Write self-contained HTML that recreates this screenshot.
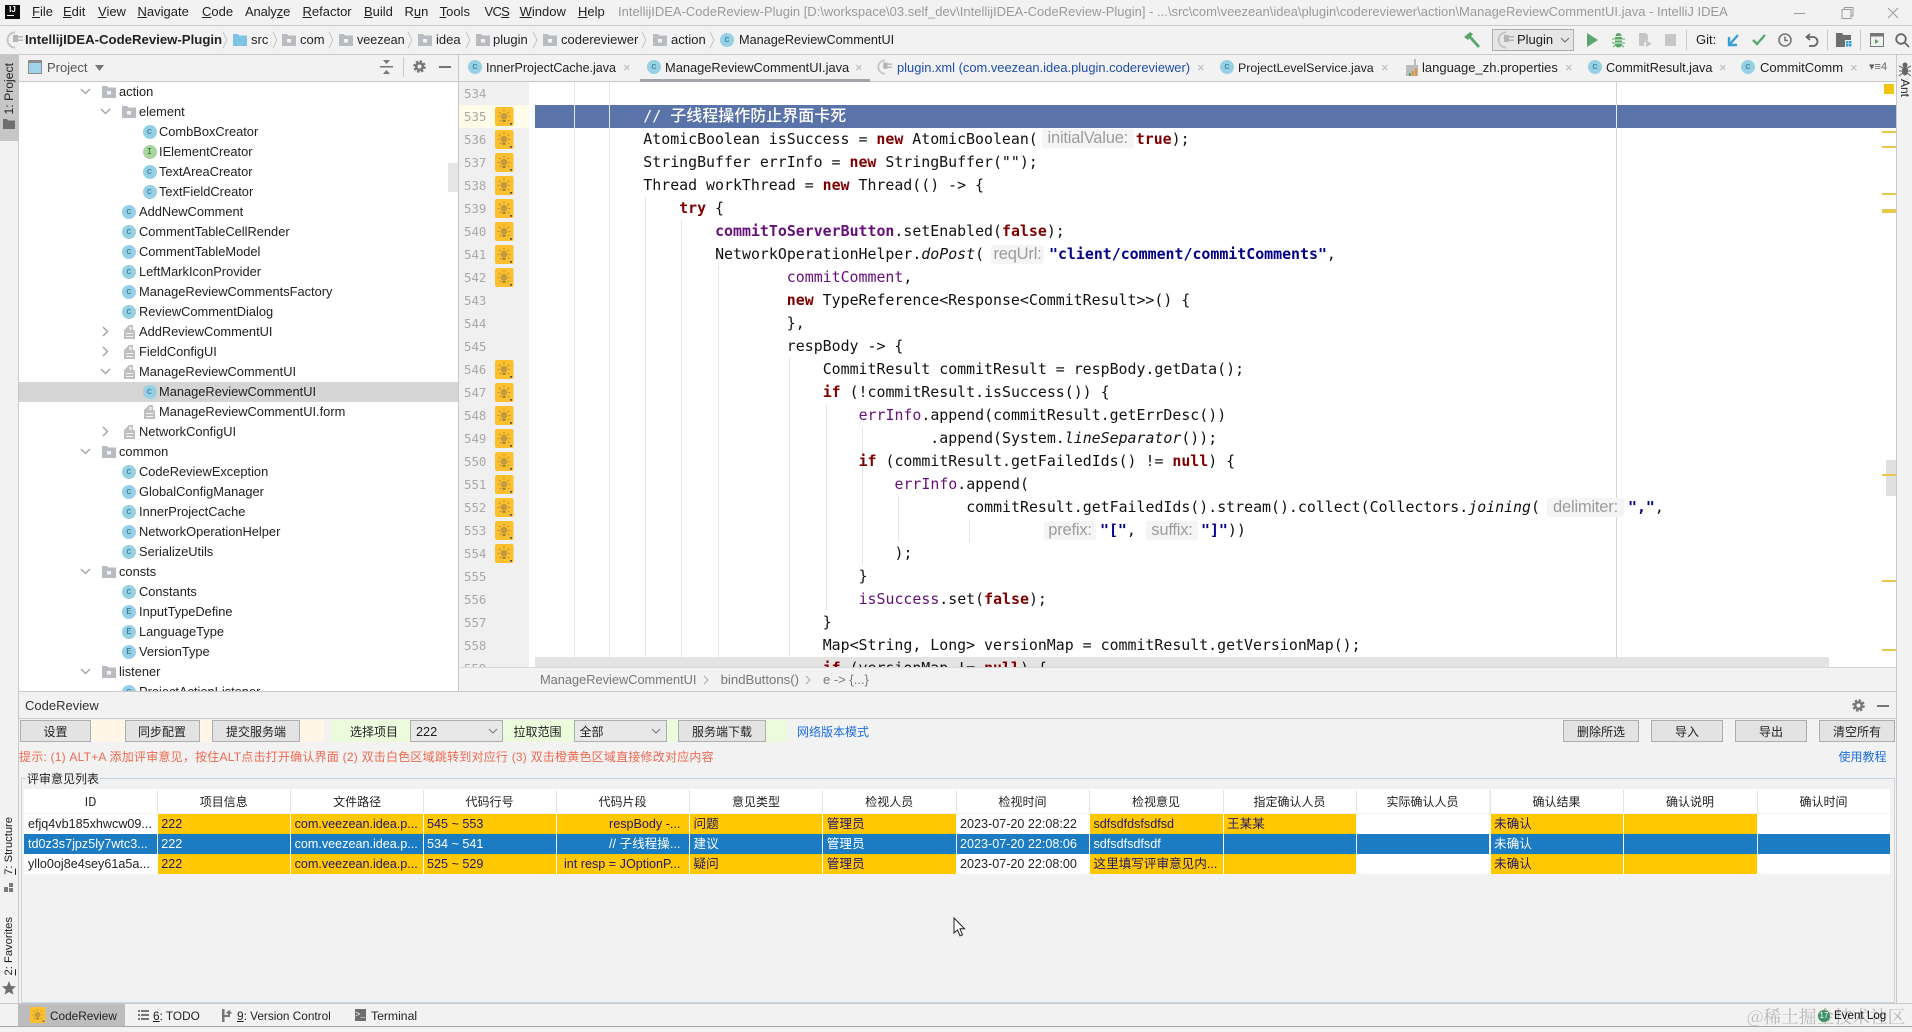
<!DOCTYPE html>
<html><head><meta charset="utf-8"><title>IntelliJ IDEA</title>
<style>
html,body{margin:0;padding:0;width:1912px;height:1032px;overflow:hidden;background:#f2f2f2}
body{position:relative;font:12.7px "Liberation Sans","Noto Sans CJK SC",sans-serif;color:#1c1c1c}
.a{position:absolute;white-space:nowrap}
svg.a{overflow:visible}
.m{top:0;height:25px;line-height:24px;font-size:13px;color:#222}
.n{top:26px;height:28px;line-height:28px;font-size:13px;color:#222}
.h{background:#c9c9c9;height:1px;position:absolute}
.v{background:#c9c9c9;width:1px;position:absolute}
.t{height:20px;line-height:20px;color:#222;font-size:12.85px}
.ci{position:absolute;width:14px;height:14px;border-radius:50%;background:#95d0e4;color:#2f6f92;font:9px/14px "Liberation Mono",monospace;text-align:center}
.g{background:#a8d5a0;color:#3d6b3d}
.tab{top:54px;height:26px;line-height:28px;font-size:13px;color:#222}
.x{top:54px;height:26px;line-height:27px;font-size:13px;color:#b5b5b5}
.ln{left:464px;width:24px;font:12.4px/23px "DejaVu Sans Mono",monospace;color:#a8a8a8;height:23px}
.c{font:14.9px/23px "DejaVu Sans Mono","Noto Sans CJK SC",monospace;height:23px;color:#111}
.k{color:#7f0000;font-weight:bold}
.s{color:#00008b;font-weight:bold}
.f{color:#660e7a;font-weight:bold}
.p{color:#660e7a}
.i{font-style:italic}
.hint{display:inline-block;font:16.5px/19px "Liberation Sans",sans-serif;color:#9c9c9c;background:#f5f5f5;border-radius:3px;text-align:center;vertical-align:1px;letter-spacing:-.2px}
.gd{position:absolute;width:1px;background:#e6e6e6}
.b{top:720px;height:20px;background:#e3e3e3;border:1px solid #aeaeae;text-align:center;font:12px/21px "Noto Sans CJK SC",sans-serif;color:#222}
.lb{font:12px/23px "Noto Sans CJK SC",sans-serif;top:720px;color:#222}
.th{top:789px;height:24px;width:133px;background:#fff;text-align:center;font:12px/26px "Noto Sans CJK SC",sans-serif;color:#222}
.td{height:20px;width:133px;overflow:hidden;font:12.6px/20px "Liberation Sans","Noto Sans CJK SC",sans-serif;box-sizing:border-box;padding-left:4px}
.o{background:#ffc800;color:#20186e}
.w{background:#fff;color:#222}
.u{background:#1b7bc3;color:#fff}
.st{font-size:11.8px;line-height:22px;top:1005px;height:22px;color:#222}
.vt{writing-mode:vertical-rl;transform:rotate(180deg);font-size:11.2px;line-height:15px;color:#222;white-space:nowrap;position:absolute}
</style></head><body>
<svg width="0" height="0" style="position:absolute">
<symbol id="bulb" viewBox="0 0 19 19"><rect width="18.5" height="19" rx="2" fill="#fcc02e"/><g stroke="#b08a34" stroke-width="1" fill="none"><path d="M9 2.800V4.400M4 4.800l1.300 1.300M14 4.800l-1.300 1.300M2.800 9.500h1.600M13.600 9.500h1.600M4.800 14l1.200-1.100M13 13l1.200 1"/></g><circle cx="9" cy="9.300" r="3.400" fill="#c49a3e"/><path d="M7.400 13h3.200v1.800H7.400z" fill="#9a8044"/><path d="M15 16h2v1.700h-2z" fill="#555"/></symbol>
<symbol id="fold" viewBox="0 0 14 12"><path d="M0 0h5l1.200 1.500H14V12H0z" fill="#b8bcc1"/><rect x="5" y="5" width="4" height="3.500" fill="#f4f4f4"/></symbol>
<symbol id="bfold" viewBox="0 0 14 12"><path d="M0 0h5l1.200 1.500H14V12H0z" fill="#7fc3e6"/></symbol>
<symbol id="form" viewBox="0 0 11 14"><path d="M0 5h11v9H0z M0 5l5-5h4v5z" fill="#bfc0c2"/><path d="M2 8h7v1H2zM2 11h7v1H2zM5.500 2h2v3h-2z" fill="#f4f4f4"/></symbol>
<symbol id="plug" viewBox="0 0 18 18"><path d="M9 1.500a7.500 7.500 0 1 0 0 15" fill="none" stroke="#c4c4c4" stroke-width="2"/><path d="M7 4h5v7H7z" fill="#b4b4b4"/><path d="M12 5h5v1.500h-5zM12 8.500h5V10h-5z" fill="#b4b4b4"/></symbol>
<symbol id="gear" viewBox="0 0 13 13"><circle cx="6.500" cy="6.500" r="5" fill="none" stroke="#777" stroke-width="2.600" stroke-dasharray="2.300 1.630"/><circle cx="6.500" cy="6.500" r="3.300" fill="none" stroke="#777" stroke-width="2.600"/></symbol>
</svg>

<!-- menu bar -->
<div class="a" style="left:5px;top:5px;width:15px;height:14px;background:#0d0d0d;color:#fff;font:bold 8px/9px 'Liberation Sans',sans-serif;text-align:center">IJ<div style="width:7px;height:1px;background:#fff;margin:1px 0 0 2px"></div></div>
<span class="a m" style="left:32px"><u>F</u>ile</span>
<span class="a m" style="left:63px"><u>E</u>dit</span>
<span class="a m" style="left:98px"><u>V</u>iew</span>
<span class="a m" style="left:137.500px"><u>N</u>avigate</span>
<span class="a m" style="left:202px"><u>C</u>ode</span>
<span class="a m" style="left:245px;letter-spacing:-.15px">Analy<u>z</u>e</span>
<span class="a m" style="left:302.500px"><u>R</u>efactor</span>
<span class="a m" style="left:364px"><u>B</u>uild</span>
<span class="a m" style="left:404.500px">R<u>u</u>n</span>
<span class="a m" style="left:439.600px"><u>T</u>ools</span>
<span class="a m" style="left:484.500px;letter-spacing:-.7px">VC<u>S</u></span>
<span class="a m" style="left:519.600px"><u>W</u>indow</span>
<span class="a m" style="left:578px"><u>H</u>elp</span>
<span class="a m" style="left:618px;color:#9a9a9a;font-size:13px">IntellijIDEA-CodeReview-Plugin [D:\workspace\03.self_dev\IntellijIDEA-CodeReview-Plugin] - ...\src\com\veezean\idea\plugin\codereviewer\action\ManageReviewCommentUI.java - IntelliJ IDEA</span>
<svg class="a" style="left:1794px;top:6px" width="110" height="14" fill="none" stroke="#9a9a9a"><path d="M0 7.500h11M48 3.500h9v9h-9zM50.500 3.500V1.500h8.500v8.500h-2M94 2l10 10M104 2l-10 10"/></svg>
<div class="h" style="left:0;top:25px;width:1912px"></div>

<!-- nav bar -->
<svg class="a" style="left:6px;top:31px" width="18" height="18"><use href="#plug"/></svg>
<span class="a n" style="left:25px;font-weight:bold;font-size:13.200px">IntellijIDEA-CodeReview-Plugin</span>
<svg class="a" style="left:233px;top:34px" width="14" height="12"><use href="#bfold"/></svg><span class="a n" style="left:251px">src</span>
<svg class="a" style="left:282px;top:34px" width="14" height="12"><use href="#fold"/></svg><span class="a n" style="left:300px">com</span>
<svg class="a" style="left:339px;top:34px" width="14" height="12"><use href="#fold"/></svg><span class="a n" style="left:357px;font-size:12.6px">veezean</span>
<svg class="a" style="left:418px;top:34px" width="14" height="12"><use href="#fold"/></svg><span class="a n" style="left:436px">idea</span>
<svg class="a" style="left:475.500px;top:34px" width="14" height="12"><use href="#fold"/></svg><span class="a n" style="left:493px">plugin</span>
<svg class="a" style="left:543px;top:34px" width="14" height="12"><use href="#fold"/></svg><span class="a n" style="left:561px">codereviewer</span>
<svg class="a" style="left:653px;top:34px" width="14" height="12"><use href="#fold"/></svg><span class="a n" style="left:671px">action</span>
<span class="ci" style="left:720px;top:33px">c</span><span class="a n" style="left:739px;font-size:12.7px">ManageReviewCommentUI</span>
<svg class="a" style="left:0;top:30px" width="720" height="20" fill="none" stroke="#c4c4c4"><path d="M223 2l4 8-4 8M273 2l4 8-4 8M329 2l4 8-4 8M408 2l4 8-4 8M466 2l4 8-4 8M533 2l4 8-4 8M642 2l4 8-4 8M710 2l4 8-4 8"/></svg>
<!-- toolbar right -->
<svg class="a" style="left:1463px;top:31px" width="18" height="18"><path d="M1 6L7 1l3 2-5 6z" fill="#59a869"/><path d="M6 7l2-2 9 10-2 2z" fill="#59a869"/></svg>
<div class="a" style="left:1492px;top:29px;width:80px;height:20px;border:1px solid #aeaeae;background:#e6e6e6"></div>
<svg class="a" style="left:1497px;top:31px" width="18" height="18"><use href="#plug"/></svg>
<span class="a" style="left:1517px;top:29px;line-height:22px;font-size:13px">Plugin</span>
<svg class="a" style="left:1560px;top:37px" width="10" height="6" fill="none" stroke="#666"><path d="M1 1l4 4 4-4"/></svg>
<svg class="a" style="left:1586px;top:32px" width="14" height="16"><path d="M1 1l11 7-11 7z" fill="#59a869"/></svg>
<svg class="a" style="left:1612px;top:32px" width="13" height="16"><path d="M3 5h7v7a3.500 3.500 0 0 1-7 0z M3.500 4a3 3 0 0 1 6 0z" fill="#59a869"/><path d="M0 7h13M0 11h13M1 15l2.500-2M12 15l-2.500-2" stroke="#59a869"/><path d="M3 8h7M3 11h7" stroke="#e6f3e6"/></svg>
<svg class="a" style="left:1637px;top:32px" width="16" height="16"><path d="M2 1h7l2 2v5l-4 3v3H2z" fill="#c6c6c6"/><path d="M9 8l6 4-6 3z" fill="#c6c6c6"/></svg>
<div class="a" style="left:1665px;top:34px;width:11px;height:12px;background:#c6c6c6"></div>
<div class="v" style="left:1686px;top:30px;height:20px"></div>
<span class="a" style="left:1696px;top:29px;line-height:22px;font-size:13px">Git:</span>
<svg class="a" style="left:1727px;top:33px" width="13" height="14"><path d="M11 2L3 11M2 4v8h8" fill="none" stroke="#389fd6" stroke-width="2.400"/></svg>
<svg class="a" style="left:1752px;top:34px" width="14" height="12"><path d="M1 6l4 4 8-9" fill="none" stroke="#59a869" stroke-width="2.400"/></svg>
<svg class="a" style="left:1778px;top:33px" width="14" height="14" fill="none" stroke="#777" stroke-width="1.600"><circle cx="7" cy="7" r="6"/><path d="M7 3.500V7.500h3"/></svg>
<svg class="a" style="left:1805px;top:33px" width="14" height="14" fill="none" stroke="#666" stroke-width="1.800"><path d="M5 1L1.500 4 5 7M2 4h6a4.500 4.500 0 0 1 0 9H4"/></svg>
<div class="v" style="left:1827px;top:30px;height:20px"></div>
<svg class="a" style="left:1836px;top:33px" width="16" height="14"><path d="M0 0h6l1.500 2H15v5H9v7H0z" fill="#6e6e6e"/><path d="M10 8h2.500v2.500H10zM13 8h2.500v2.500H13zM10 11h2.500v2.500H10zM13 11h2.500v2.500H13z" fill="#389fd6"/></svg>
<div class="v" style="left:1860px;top:30px;height:20px"></div>
<svg class="a" style="left:1870px;top:33px" width="14" height="14"><rect x=".5" y=".5" width="13" height="13" fill="none" stroke="#777"/><path d="M1 1h12v2.500H1z" fill="#777"/><path d="M5 6l4 2.500-4 2.500z" fill="#59a869"/></svg>
<svg class="a" style="left:1895px;top:33px" width="15" height="15" fill="none" stroke="#666" stroke-width="1.800"><circle cx="6" cy="6" r="4.800"/><path d="M9.500 9.500l4.500 4.500"/></svg>
<div class="h" style="left:0;top:54px;width:1912px"></div>

<!-- left stripe -->
<div class="a" style="left:0;top:55px;width:18px;height:86px;background:#c6c6c6"></div>
<div class="vt" style="left:2px;top:63px;font-size:12.2px">1: Project</div>
<svg class="a" style="left:3px;top:119px" width="12" height="10"><path d="M0 0h4l1 1.500h7V10H0z" fill="#6e6e6e"/></svg>
<div class="vt" style="left:2px;top:817px"><u>7</u>: Structure</div>
<svg class="a" style="left:4px;top:883px" width="10" height="10"><path d="M0 4h4v5H0zM5 0h4v4H5zM5 5h4v4H5z" fill="#7a7a7a"/></svg>
<div class="vt" style="left:2px;top:917px"><u>2</u>: Favorites</div>
<svg class="a" style="left:2px;top:981px" width="14" height="14"><path d="M7 0l2 5 5 .4-3.800 3.200 1.200 5L7 11l-4.400 2.600 1.200-5L0 5.400 5 5z" fill="#6e6e6e"/></svg>
<div class="v" style="left:18px;top:55px;height:949px"></div>

<!-- project panel -->
<svg class="a" style="left:28px;top:60px" width="14" height="14"><rect x=".5" y=".5" width="13" height="13" fill="#9fd3ea" stroke="#8c8c8c"/><path d="M1 1h12v2H1z" fill="#8c8c8c"/></svg>
<span class="a" style="left:47px;top:57px;line-height:22px;font-size:13px;color:#555">Project</span>
<svg class="a" style="left:95px;top:65px" width="10" height="6"><path d="M0 0h9L4.500 6z" fill="#777"/></svg>
<svg class="a" style="left:380px;top:60px" width="13" height="14" fill="#777"><path d="M0 6h13v1.500H0z"/><path d="M3 0h7L6.500 4zM3 14h7L6.500 10z"/></svg>
<div class="v" style="left:403px;top:57px;height:20px"></div>
<svg class="a" style="left:413px;top:60px" width="13" height="13"><use href="#gear"/></svg>
<div class="a" style="left:439px;top:66px;width:12px;height:2px;background:#777"></div>
<div class="h" style="left:19px;top:81px;width:1877px"></div>

<div class="a" style="left:19px;top:82px;width:439px;height:610px;background:#fff;overflow:hidden">
<div class="a" style="left:0;top:300px;width:439px;height:20px;background:#d5d5d5"></div>
<div class="a" style="left:429px;top:81px;width:10px;height:29px;background:#e6e6e6"></div>
<svg class="a" style="left:0;top:0" width="100" height="610" fill="none" stroke="#a6a6a6" stroke-width="1.500"><path d="M62 7l4.500 4.500L71 7M82 27l4.500 4.500L91 27M82 287l4.500 4.500L91 287M62 367l4.500 4.500L71 367M62 487l4.500 4.500L71 487M62 587l4.500 4.500L71 587M84 245l4.500 4.500L84 254M84 265l4.500 4.500L84 274M84 345l4.500 4.500L84 354"/></svg>
<!-- folders -->
<svg class="a" style="left:83px;top:4px" width="14" height="12"><use href="#fold"/></svg><span class="a t" style="left:100px;top:0">action</span>
<svg class="a" style="left:103px;top:24px" width="14" height="12"><use href="#fold"/></svg><span class="a t" style="left:120px;top:20px">element</span>
<span class="ci" style="left:123.500px;top:43px">c</span><span class="a t" style="left:140px;top:40px">CombBoxCreator</span>
<span class="ci g" style="left:123.500px;top:63px">I</span><span class="a t" style="left:140px;top:60px">IElementCreator</span>
<span class="ci" style="left:123.500px;top:83px">c</span><span class="a t" style="left:140px;top:80px">TextAreaCreator</span>
<span class="ci" style="left:123.500px;top:103px">c</span><span class="a t" style="left:140px;top:100px">TextFieldCreator</span>
<span class="ci" style="left:103px;top:123px">c</span><span class="a t" style="left:120px;top:120px">AddNewComment</span>
<span class="ci" style="left:103px;top:143px">c</span><span class="a t" style="left:120px;top:140px">CommentTableCellRender</span>
<span class="ci" style="left:103px;top:163px">c</span><span class="a t" style="left:120px;top:160px">CommentTableModel</span>
<span class="ci" style="left:103px;top:183px">c</span><span class="a t" style="left:120px;top:180px">LeftMarkIconProvider</span>
<span class="ci" style="left:103px;top:203px">c</span><span class="a t" style="left:120px;top:200px">ManageReviewCommentsFactory</span>
<span class="ci" style="left:103px;top:223px">c</span><span class="a t" style="left:120px;top:220px">ReviewCommentDialog</span>
<svg class="a" style="left:105px;top:243px" width="11" height="14"><use href="#form"/></svg><span class="a t" style="left:120px;top:240px">AddReviewCommentUI</span>
<svg class="a" style="left:105px;top:263px" width="11" height="14"><use href="#form"/></svg><span class="a t" style="left:120px;top:260px">FieldConfigUI</span>
<svg class="a" style="left:105px;top:283px" width="11" height="14"><use href="#form"/></svg><span class="a t" style="left:120px;top:280px">ManageReviewCommentUI</span>
<span class="ci" style="left:123.500px;top:303px">c</span><span class="a t" style="left:140px;top:300px">ManageReviewCommentUI</span>
<svg class="a" style="left:125px;top:323px" width="11" height="14"><use href="#form"/></svg><span class="a t" style="left:140px;top:320px">ManageReviewCommentUI.form</span>
<svg class="a" style="left:105px;top:343px" width="11" height="14"><use href="#form"/></svg><span class="a t" style="left:120px;top:340px">NetworkConfigUI</span>
<svg class="a" style="left:83px;top:364px" width="14" height="12"><use href="#fold"/></svg><span class="a t" style="left:100px;top:360px">common</span>
<span class="ci" style="left:103px;top:383px">c</span><span class="a t" style="left:120px;top:380px">CodeReviewException</span>
<span class="ci" style="left:103px;top:403px">c</span><span class="a t" style="left:120px;top:400px">GlobalConfigManager</span>
<span class="ci" style="left:103px;top:423px">c</span><span class="a t" style="left:120px;top:420px">InnerProjectCache</span>
<span class="ci" style="left:103px;top:443px">c</span><span class="a t" style="left:120px;top:440px">NetworkOperationHelper</span>
<span class="ci" style="left:103px;top:463px">c</span><span class="a t" style="left:120px;top:460px">SerializeUtils</span>
<svg class="a" style="left:83px;top:484px" width="14" height="12"><use href="#fold"/></svg><span class="a t" style="left:100px;top:480px">consts</span>
<span class="ci" style="left:103px;top:503px">c</span><span class="a t" style="left:120px;top:500px">Constants</span>
<span class="ci" style="left:103px;top:523px">E</span><span class="a t" style="left:120px;top:520px">InputTypeDefine</span>
<span class="ci" style="left:103px;top:543px">E</span><span class="a t" style="left:120px;top:540px">LanguageType</span>
<span class="ci" style="left:103px;top:563px">E</span><span class="a t" style="left:120px;top:560px">VersionType</span>
<svg class="a" style="left:83px;top:584px" width="14" height="12"><use href="#fold"/></svg><span class="a t" style="left:100px;top:580px">listener</span>
<span class="ci" style="left:103px;top:603px">c</span><span class="a t" style="left:120px;top:600px">ProjectActionListener</span>
</div>
<div class="v" style="left:458px;top:55px;height:637px"></div>

<!-- tabs -->
<span class="ci" style="left:468px;top:60px">c</span><span class="a tab" style="left:486px;font-size:12.5px">InnerProjectCache.java</span><span class="a x" style="left:623px">×</span>
<div class="a" style="left:640px;top:79px;width:230px;height:3px;background:#a3a3ab"></div>
<span class="ci" style="left:647px;top:60px">c</span><span class="a tab" style="left:665px;font-size:12.85px">ManageReviewCommentUI.java</span><span class="a x" style="left:855px">×</span>
<svg class="a" style="left:877px;top:59px" width="16" height="16"><use href="#plug"/></svg><span class="a tab" style="left:897px;color:#1f4fa8;font-size:12.9px">plugin.xml (com.veezean.idea.plugin.codereviewer)</span><span class="a x" style="left:1197px">×</span>
<span class="ci" style="left:1220px;top:60px">c</span><span class="a tab" style="left:1238px;font-size:12.4px">ProjectLevelService.java</span><span class="a x" style="left:1381px">×</span>
<svg class="a" style="left:1406px;top:59px" width="14" height="17"><path d="M0 6h8V0h2v6h2v11H0z" fill="#bcbcbc"/><path d="M6 12h2v5H6zM9 9h2v8H9z" fill="#e0953a"/><path d="M3 14h2v3H3z" fill="#59a869"/></svg><span class="a tab" style="left:1422px">language_zh.properties</span><span class="a x" style="left:1565px">×</span>
<span class="ci" style="left:1588px;top:60px">c</span><span class="a tab" style="left:1606px;font-size:12.7px">CommitResult.java</span><span class="a x" style="left:1719px">×</span>
<span class="ci" style="left:1741px;top:60px">c</span><span class="a tab" style="left:1760px">CommitComm</span><span class="a x" style="left:1850px">×</span>
<span class="a" style="left:1869px;top:60px;font-size:11px;line-height:15px;color:#666">▾≡4</span>

<!-- editor -->
<div class="a" style="left:459px;top:82px;width:1437px;height:585px;overflow:hidden;background:#fff" id="ed">
<div class="a" style="left:0;top:0;width:70px;height:585px;background:#f0f0f0"></div>
<div class="a" style="left:0;top:23px;width:70px;height:23px;background:#fffde9"></div>
<div class="a" style="left:76px;top:23px;width:1361px;height:23px;background:#5a73a9"></div>
</div>
<div class="gd" style="left:573.500px;top:82px;height:585px"></div>
<div class="gd" style="left:609.400px;top:82px;height:585px"></div>
<div class="gd" style="left:645.300px;top:197px;height:470px"></div>
<div class="gd" style="left:681px;top:220px;height:447px"></div>
<div class="gd" style="left:717.500px;top:266px;height:401px"></div>
<div class="gd" style="left:789px;top:358px;height:309px"></div>
<div class="gd" style="left:825.700px;top:404px;height:207px"></div>
<div class="gd" style="left:861.600px;top:427px;height:138px"></div>
<div class="gd" style="left:897.500px;top:496px;height:46px"></div>
<div class="gd" style="left:969.400px;top:519px;height:23px"></div>
<div class="gd" style="left:1615.700px;top:82px;height:585px;background:#d4d4d4"></div>
<div class="gd" style="left:573.500px;top:105px;height:23px;background:#e8ecf4"></div>
<div class="gd" style="left:609.400px;top:105px;height:23px;background:#e8ecf4"></div>
<div class="gd" style="left:1615.700px;top:105px;height:23px;background:#e8ecf4"></div>

<span class="a ln" style="top:82px">534</span><span class="a ln" style="top:105px">535</span><span class="a ln" style="top:128px">536</span><span class="a ln" style="top:151px">537</span><span class="a ln" style="top:174px">538</span><span class="a ln" style="top:197px">539</span><span class="a ln" style="top:220px">540</span><span class="a ln" style="top:243px">541</span><span class="a ln" style="top:266px">542</span><span class="a ln" style="top:289px">543</span><span class="a ln" style="top:312px">544</span><span class="a ln" style="top:335px">545</span><span class="a ln" style="top:358px">546</span><span class="a ln" style="top:381px">547</span><span class="a ln" style="top:404px">548</span><span class="a ln" style="top:427px">549</span><span class="a ln" style="top:450px">550</span><span class="a ln" style="top:473px">551</span><span class="a ln" style="top:496px">552</span><span class="a ln" style="top:519px">553</span><span class="a ln" style="top:542px">554</span><span class="a ln" style="top:565px">555</span><span class="a ln" style="top:588px">556</span><span class="a ln" style="top:611px">557</span><span class="a ln" style="top:634px">558</span>

<svg class="a" style="left:495px;top:107px" width="19" height="19"><use href="#bulb"/></svg>
<svg class="a" style="left:495px;top:130px" width="19" height="19"><use href="#bulb"/></svg>
<svg class="a" style="left:495px;top:153px" width="19" height="19"><use href="#bulb"/></svg>
<svg class="a" style="left:495px;top:176px" width="19" height="19"><use href="#bulb"/></svg>
<svg class="a" style="left:495px;top:199px" width="19" height="19"><use href="#bulb"/></svg>
<svg class="a" style="left:495px;top:222px" width="19" height="19"><use href="#bulb"/></svg>
<svg class="a" style="left:495px;top:245px" width="19" height="19"><use href="#bulb"/></svg>
<svg class="a" style="left:495px;top:268px" width="19" height="19"><use href="#bulb"/></svg>
<svg class="a" style="left:495px;top:360px" width="19" height="19"><use href="#bulb"/></svg>
<svg class="a" style="left:495px;top:383px" width="19" height="19"><use href="#bulb"/></svg>
<svg class="a" style="left:495px;top:406px" width="19" height="19"><use href="#bulb"/></svg>
<svg class="a" style="left:495px;top:429px" width="19" height="19"><use href="#bulb"/></svg>
<svg class="a" style="left:495px;top:452px" width="19" height="19"><use href="#bulb"/></svg>
<svg class="a" style="left:495px;top:475px" width="19" height="19"><use href="#bulb"/></svg>
<svg class="a" style="left:495px;top:498px" width="19" height="19"><use href="#bulb"/></svg>
<svg class="a" style="left:495px;top:521px" width="19" height="19"><use href="#bulb"/></svg>
<svg class="a" style="left:495px;top:544px" width="19" height="19"><use href="#bulb"/></svg>

<span class="a" style="left:643.300px;top:103px;color:#fff;height:23px;font:500 14.9px/23px 'DejaVu Sans Mono',monospace">//<span style="font:500 16px/23px 'Noto Sans CJK SC',sans-serif;margin-left:9px">子线程操作防止界面卡死</span></span>
<span class="a c" style="left:643.300px;top:128px">AtomicBoolean isSuccess = <span class="k">new</span> AtomicBoolean(<span class="hint" style="width:92px;margin:0 2px 0 4px">initialValue:</span><span class="k">true</span>);</span>
<span class="a c" style="left:643.300px;top:151px">StringBuffer errInfo = <span class="k">new</span> StringBuffer("");</span>
<span class="a c" style="left:643.300px;top:174px">Thread workThread = <span class="k">new</span> Thread(() -&gt; {</span>
<span class="a c" style="left:679.200px;top:197px"><span class="k">try</span> {</span>
<span class="a c" style="left:715.100px;top:220px"><span class="f">commitToServerButton</span>.setEnabled(<span class="k">false</span>);</span>
<span class="a c" style="left:715.100px;top:243px">NetworkOperationHelper.<span class="i">doPost</span>(</span>
<span class="a" style="left:991px;top:245px;width:53px;height:19px"><span class="hint" style="width:53px;vertical-align:top">reqUrl:</span></span>
<span class="a c" style="left:1049px;top:243px"><span class="s">"client/comment/commitComments"</span>,</span>
<span class="a c p" style="left:786.800px;top:266px">commitComment<span style="color:#111">,</span></span>
<span class="a c" style="left:786.800px;top:289px"><span class="k">new</span> TypeReference&lt;Response&lt;CommitResult&gt;&gt;() {</span>
<span class="a c" style="left:786.800px;top:312px">},</span>
<span class="a c" style="left:786.800px;top:335px">respBody -&gt; {</span>
<span class="a c" style="left:822.700px;top:358px">CommitResult commitResult = respBody.getData();</span>
<span class="a c" style="left:822.700px;top:381px"><span class="k">if</span> (!commitResult.isSuccess()) {</span>
<span class="a c" style="left:858.600px;top:404px"><span class="p">errInfo</span>.append(commitResult.getErrDesc())</span>
<span class="a c" style="left:930.300px;top:427px">.append(System.<span class="i">lineSeparator</span>());</span>
<span class="a c" style="left:858.600px;top:450px"><span class="k">if</span> (commitResult.getFailedIds() != <span class="k">null</span>) {</span>
<span class="a c" style="left:894.500px;top:473px"><span class="p">errInfo</span>.append(</span>
<span class="a c" style="left:966.200px;top:496px">commitResult.getFailedIds().stream().collect(Collectors.<span class="i">joining</span>(</span>
<span class="a" style="left:1547px;top:498px;width:77px;height:19px"><span class="hint" style="width:77px;vertical-align:top">delimiter:</span></span>
<span class="a c" style="left:1628px;top:496px"><span class="s">","</span>,</span>
<span class="a" style="left:1044px;top:521px;width:52px;height:19px"><span class="hint" style="width:52px;vertical-align:top">prefix:</span></span>
<span class="a c" style="left:1100px;top:519px"><span class="s">"["</span>,</span>
<span class="a" style="left:1146px;top:521px;width:52px;height:19px"><span class="hint" style="width:52px;vertical-align:top">suffix:</span></span>
<span class="a c" style="left:1201px;top:519px"><span class="s">"]"</span>))</span>
<span class="a c" style="left:894.500px;top:542px">);</span>
<span class="a c" style="left:858.600px;top:565px">}</span>
<span class="a c" style="left:858.600px;top:588px"><span class="p">isSuccess</span>.set(<span class="k">false</span>);</span>
<span class="a c" style="left:822.700px;top:611px">}</span>
<span class="a c" style="left:822.700px;top:634px">Map&lt;String, Long&gt; versionMap = commitResult.getVersionMap();</span>
<div class="a" style="left:535px;top:657px;width:1294px;height:10px;background:#e3e3e3"></div>
<div class="a" style="left:459px;top:657px;width:1437px;height:10px;overflow:hidden">
<span class="a ln" style="left:5px;top:0">559</span>
<span class="a c" style="left:363.700px;top:0"><span class="k">if</span> (versionMap != <span class="k">null</span>) {</span>
</div>
<!-- error stripe -->
<div class="a" style="left:1884px;top:84px;width:10px;height:10px;background:#f1c40f"></div>
<div class="a" style="left:1886px;top:460px;width:10px;height:36px;background:#e0e0e0"></div>
<div class="a" style="left:1882px;top:131px;width:14px;height:2px;background:#e8c84a"></div>
<div class="a" style="left:1882px;top:146px;width:14px;height:2px;background:#e8c84a"></div>
<div class="a" style="left:1882px;top:193px;width:14px;height:2px;background:#e8c84a"></div>
<div class="a" style="left:1882px;top:209px;width:14px;height:4px;background:#e8c84a"></div>
<div class="a" style="left:1882px;top:474px;width:14px;height:2px;background:#e8c84a"></div>
<div class="a" style="left:1882px;top:580px;width:14px;height:2px;background:#e8c84a"></div>
<div class="a" style="left:1882px;top:649px;width:14px;height:2px;background:#e8c84a"></div>

<!-- right stripe -->
<div class="v" style="left:1896px;top:55px;height:949px"></div>
<svg class="a" style="left:1899px;top:62px" width="12" height="14" stroke="#666" fill="#666"><ellipse cx="6" cy="3" rx="2" ry="2"/><ellipse cx="6" cy="9" rx="2.500" ry="4"/><path d="M0 4l4 2M12 4L8 6M0 9h4M12 9H8M0 14l4-3M12 14l-4-3" fill="none"/></svg>
<div class="a" style="left:1897px;top:79px;writing-mode:vertical-rl;font-size:12px;line-height:15px;color:#222">Ant</div>

<!-- breadcrumb -->
<div class="h" style="left:459px;top:667px;width:1437px;background:#d8d8d8"></div>
<span class="a" style="left:540px;top:670px;line-height:20px;font-size:12.8px;color:#777">ManageReviewCommentUI</span>
<span class="a" style="left:720.600px;top:670px;line-height:20px;font-size:13.2px;color:#777">bindButtons()</span>
<span class="a" style="left:823px;top:670px;line-height:20px;font-size:13px;color:#777">e -&gt; {...}</span>
<svg class="a" style="left:704px;top:675px" width="110" height="10" fill="none" stroke="#aaa"><path d="M0 1l4 4-4 4M102 1l4 4-4 4"/></svg>

<!-- tool window -->
<div class="h" style="left:19px;top:691px;width:1877px"></div>
<span class="a" style="left:25px;top:695px;line-height:22px;font-size:13px;color:#333">CodeReview</span>
<svg class="a" style="left:1852px;top:699px" width="13" height="13"><use href="#gear"/></svg>
<div class="a" style="left:1877px;top:705px;width:12px;height:2px;background:#777"></div>
<div class="h" style="left:19px;top:718px;width:1877px"></div>

<div class="a" style="left:91px;top:720px;width:233px;height:22px;background:#fff6e8"></div>
<div class="a" style="left:331px;top:720px;width:456px;height:22px;background:#ecfbdc"></div>
<div class="a b" style="left:20px;width:69px">设置</div>
<div class="a b" style="left:124.500px;width:73px">同步配置</div>
<div class="a b" style="left:212px;width:86px">提交服务端</div>
<span class="a lb" style="left:350px">选择项目</span>
<div class="a" style="left:410px;top:720px;width:91px;height:20px;border:1px solid #aeaeae;background:#e8e8e8;line-height:22px;font-size:12.7px;text-indent:5px">222</div>
<svg class="a" style="left:488px;top:728px" width="10" height="6" fill="none" stroke="#777"><path d="M1 1l4 4 4-4"/></svg>
<span class="a lb" style="left:513.500px">拉取范围</span>
<div class="a" style="left:573.500px;top:720px;width:91px;height:20px;border:1px solid #aeaeae;background:#e8e8e8;font:12px/22px 'Noto Sans CJK SC',sans-serif;text-indent:5px">全部</div>
<svg class="a" style="left:651px;top:728px" width="10" height="6" fill="none" stroke="#777"><path d="M1 1l4 4 4-4"/></svg>
<div class="a b" style="left:678px;width:86px">服务端下载</div>
<span class="a lb" style="left:797px;color:#1e6fe0">网络版本模式</span>
<div class="a b" style="left:1563px;width:74px">删除所选</div>
<div class="a b" style="left:1651px;width:70px">导入</div>
<div class="a b" style="left:1735px;width:70px">导出</div>
<div class="a b" style="left:1819px;width:74px">清空所有</div>
<span class="a" style="left:19px;top:746px;font:12px/22px 'Liberation Sans','Noto Sans CJK SC',sans-serif;color:#ee6a50;letter-spacing:.22px">提示: (1) ALT+A 添加评审意见，按住ALT点击打开确认界面 (2) 双击白色区域跳转到对应行 (3) 双击橙黄色区域直接修改对应内容</span>
<span class="a" style="left:1838.500px;top:746px;font:12px/22px 'Noto Sans CJK SC',sans-serif;color:#1e6fe0">使用教程</span>

<div class="a" style="left:21px;top:778px;width:1872px;height:223px;border:1px solid #c6d6e4"></div>
<span class="a" style="left:26px;top:769px;padding:0 1px;background:#f2f2f2;font:12px/20px 'Noto Sans CJK SC',sans-serif;color:#222">评审意见列表</span>

<!-- table -->
<div class="a th" style="left:24px">ID</div><div class="a th" style="left:157.300px">项目信息</div><div class="a th" style="left:290.600px">文件路径</div><div class="a th" style="left:423px">代码行号</div><div class="a th" style="left:556px">代码片段</div><div class="a th" style="left:689.500px">意见类型</div><div class="a th" style="left:822.800px">检视人员</div><div class="a th" style="left:956px">检视时间</div><div class="a th" style="left:1089.500px">检视意见</div><div class="a th" style="left:1223px">指定确认人员</div><div class="a th" style="left:1356px">实际确认人员</div><div class="a th" style="left:1490px">确认结果</div><div class="a th" style="left:1623.500px">确认说明</div><div class="a th" style="left:1757px">确认时间</div>
<svg class="a" style="left:24px;top:790px" width="1866" height="23" stroke="#e4e4e4"><path d="M133.500 0v23M266.500 0v23M399.500 0v23M532.500 0v23M665.500 0v23M798.500 0v23M932.500 0v23M1065.500 0v23M1199.500 0v23M1332.500 0v23M1466.500 0v23M1599.500 0v23M1733.500 0v23"/></svg>

<div class="a td w" style="left:24px;top:814px">efjq4vb185xhwcw09...</div><div class="a td o" style="left:157.300px;top:814px">222</div><div class="a td o" style="left:290.600px;top:814px">com.veezean.idea.p...</div><div class="a td o" style="left:423px;top:814px">545 ~ 553</div><div class="a td o" style="left:556px;top:814px;padding-left:53px">respBody -...</div><div class="a td o" style="left:689.500px;top:814px">问题</div><div class="a td o" style="left:822.800px;top:814px">管理员</div><div class="a td w" style="left:956px;top:814px">2023-07-20 22:08:22</div><div class="a td o" style="left:1089.500px;top:814px">sdfsdfdsfsdfsd</div><div class="a td o" style="left:1223px;top:814px">王某某</div><div class="a td w" style="left:1356px;top:814px"></div><div class="a td o" style="left:1490px;top:814px">未确认</div><div class="a td o" style="left:1623.500px;top:814px"></div><div class="a td w" style="left:1757px;top:814px"></div>

<div class="a td u" style="left:24px;top:834px">td0z3s7jpz5ly7wtc3...</div><div class="a td u" style="left:157.300px;top:834px">222</div><div class="a td u" style="left:290.600px;top:834px">com.veezean.idea.p...</div><div class="a td u" style="left:423px;top:834px">534 ~ 541</div><div class="a td u" style="left:556px;top:834px;padding-left:53px">// 子线程操...</div><div class="a td u" style="left:689.500px;top:834px">建议</div><div class="a td u" style="left:822.800px;top:834px">管理员</div><div class="a td u" style="left:956px;top:834px">2023-07-20 22:08:06</div><div class="a td u" style="left:1089.500px;top:834px">sdfsdfsdfsdf</div><div class="a td u" style="left:1223px;top:834px"></div><div class="a td u" style="left:1356px;top:834px"></div><div class="a td u" style="left:1490px;top:834px">未确认</div><div class="a td u" style="left:1623.500px;top:834px"></div><div class="a td u" style="left:1757px;top:834px"></div>

<div class="a td w" style="left:24px;top:854px">yllo0oj8e4sey61a5a...</div><div class="a td o" style="left:157.300px;top:854px">222</div><div class="a td o" style="left:290.600px;top:854px">com.veezean.idea.p...</div><div class="a td o" style="left:423px;top:854px">525 ~ 529</div><div class="a td o" style="left:556px;top:854px;padding-left:8px">int resp = JOptionP...</div><div class="a td o" style="left:689.500px;top:854px">疑问</div><div class="a td o" style="left:822.800px;top:854px">管理员</div><div class="a td w" style="left:956px;top:854px">2023-07-20 22:08:00</div><div class="a td o" style="left:1089.500px;top:854px">这里填写评审意见内...</div><div class="a td o" style="left:1223px;top:854px"></div><div class="a td w" style="left:1356px;top:854px"></div><div class="a td o" style="left:1490px;top:854px">未确认</div><div class="a td o" style="left:1623.500px;top:854px"></div><div class="a td w" style="left:1757px;top:854px"></div>
<svg class="a" style="left:24px;top:814px" width="1866" height="60" stroke="#fff"><path d="M133.500 0v60M266.500 0v60M399.500 0v60M532.500 0v60M665.500 0v60M798.500 0v60M932.500 0v60M1065.500 0v60M1199.500 0v60M1332.500 0v60M1466.500 0v60M1599.500 0v60M1733.500 0v60"/></svg>

<!-- mouse cursor -->
<svg class="a" style="left:953px;top:917px" width="14" height="21"><path d="M1 1v15l3.500-3.200 2.500 6 2.500-1-2.500-6h4.500z" fill="#fff" stroke="#222"/></svg>

<!-- bottom stripe -->
<div class="h" style="left:0;top:1003px;width:1912px"></div>
<div class="a" style="left:18px;top:1004px;width:106.500px;height:22px;background:#bdbdbd"></div>
<svg class="a" style="left:30px;top:1006px" width="16" height="18"><use href="#bulb"/></svg>
<span class="a st" style="left:50px">CodeReview</span>
<svg class="a" style="left:137.500px;top:1010px" width="11" height="10" fill="#777"><path d="M0 0h2v2H0zM3 0h8v2H3zM0 4h2v2H0zM3 4h8v2H3zM0 8h2v2H0zM3 8h8v2H3z"/></svg>
<span class="a st" style="left:153px"><u>6</u>: TODO</span>
<svg class="a" style="left:221.500px;top:1009px" width="11" height="13" fill="#777"><path d="M0 0h2.500v13H0zM2 6h4v2H2zM7 1l3.500 3.500H8V8H6V4.500H3.500z"/></svg>
<span class="a st" style="left:237px"><u>9</u>: Version Control</span>
<div class="a" style="left:355px;top:1009px;width:11px;height:12px;background:#6e6e6e;color:#fff;font:9px/12px 'Liberation Mono',monospace">&gt;_</div>
<span class="a st" style="left:371px;font-size:12.2px">Terminal</span>
<span class="a" style="left:1747px;top:1006px;font:17.800px/22px 'Noto Serif CJK SC',serif;color:#b8b8b8">@稀土掘金技术社区</span>
<div class="a" style="left:1818px;top:1010px;width:12px;height:12px;border-radius:50%;background:#3e9168;color:#fff;font:8px/12px 'Liberation Sans',sans-serif;text-align:center">17</div>
<span class="a st" style="left:1834px;color:#111;font-size:11.6px">Event Log</span>
<div class="h" style="left:0;top:1026px;width:1912px;background:#a6a6a6"></div>
</body></html>
